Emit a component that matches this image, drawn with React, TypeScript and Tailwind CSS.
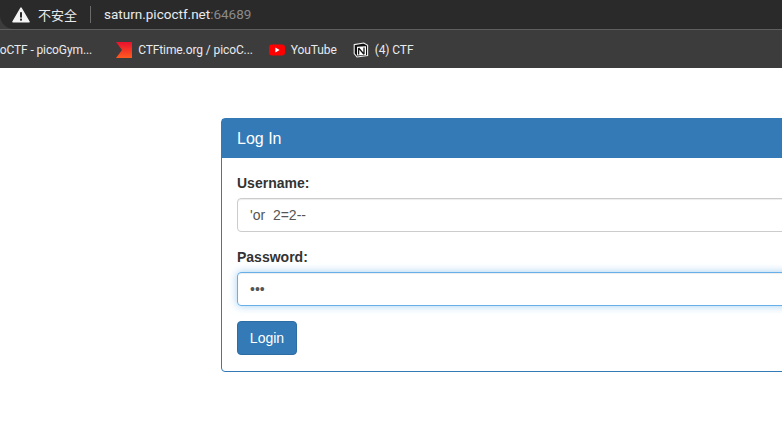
const sans = "font-['Liberation_Sans',Arial,sans-serif]";

function WarningIcon() {
  return (
    <svg width="18" height="16" viewBox="0 0 18 16">
      <path d="M9 1.2 L17 14.8 L1 14.8 Z" fill="#f4f4f4" stroke="#f4f4f4" strokeWidth="1.6" strokeLinejoin="round" />
      <rect x="8" y="5.2" width="2" height="5.4" fill="#2a2a2a" />
      <rect x="8" y="11.6" width="2" height="2" fill="#2a2a2a" />
    </svg>
  );
}

function CtftimeIcon() {
  return (
    <svg width="16" height="16" viewBox="0 0 16 16">
      <defs>
        <linearGradient id="ctf" x1="0" y1="0" x2="0" y2="1">
          <stop offset="0" stopColor="#e8112d" />
          <stop offset="1" stopColor="#ff5a1f" />
        </linearGradient>
      </defs>
      <path d="M0 0 H16 V16 H0 L6 8 Z" fill="url(#ctf)" />
    </svg>
  );
}

function YoutubeIcon() {
  return (
    <svg width="16" height="12" viewBox="0 0 16 12">
      <rect width="16" height="11" y="0.5" rx="3" fill="#ff0000" />
      <path d="M6.4 3.6 L10.6 6 L6.4 8.4 Z" fill="#ffffff" />
    </svg>
  );
}

function NotionIcon() {
  return (
    <svg width="16" height="16" viewBox="0 0 16 16">
      <path d="M1.2 2.6 L10.8 1 L14.6 3.4 V13.6 L4 15 L1.2 11.6 Z" fill="#111" stroke="#eee" strokeWidth="1.1" />
      <path d="M4 4.8 L13 4.2 V13 L4 13.6 Z" fill="#fff" />
      <path d="M5.6 6 V12.4 M5.6 6 L11 12.2 M11 5.6 V12.2" stroke="#111" strokeWidth="1.3" fill="none" />
    </svg>
  );
}

function Bookmark({ icon, label }: { icon?: React.ReactNode; label: string }) {
  return (
    <div className="flex items-center gap-[6px] shrink-0">
      {icon}
      <span className="font-['Roboto',sans-serif] text-[12px] tracking-[-0.1px] text-[#e8eaed] whitespace-nowrap">{label}</span>
    </div>
  );
}

export default function App() {
  return (
    <div className={`h-[433px] w-[782px] overflow-hidden bg-white ${sans}`}>
      {/* browser chrome */}
      <div className="h-[29px] bg-[#3c3c3c]">
        <div className="flex h-full items-center rounded-bl-[14px] bg-[#2a2a2a] pl-[12px]">
          <WarningIcon />
          <span className="ml-[8px] font-['Noto_Sans_CJK_SC',sans-serif] text-[13px] text-[#e8eaed]">不安全</span>
          <div className="ml-[13px] h-[17px] w-px bg-[#6b6b6b]" />
          <span className="ml-[13px] font-['Roboto',sans-serif] text-[13.5px] text-[#e8eaed]">
            saturn.picoctf.net<span className="text-[#8a8a8a]">:64689</span>
          </span>
        </div>
      </div>
      <div className="h-[39px] overflow-hidden border-t border-[#5f5f5f] bg-[#3c3c3c]">
        <div className="ml-[-16px] flex h-full items-center pt-[1px]">
          <Bookmark label="picoCTF - picoGym..." />
          <div className="ml-[24px]">
            <Bookmark icon={<CtftimeIcon />} label="CTFtime.org / picoC..." />
          </div>
          <div className="ml-[16px]">
            <Bookmark icon={<YoutubeIcon />} label="YouTube" />
          </div>
          <div className="ml-[16px]">
            <Bookmark icon={<NotionIcon />} label="(4) CTF" />
          </div>
        </div>
      </div>

      {/* login panel */}
      <div className="pl-[221px] pt-[50px]">
        <div className="w-[760px] rounded-[4px] border border-[#337ab7]">
          <div className="flex h-[39px] items-center bg-[#337ab7] px-[15px] text-[16px] text-white">Log In</div>
          <div className="px-[15px] pt-[15px] pb-[16px] text-[14px] text-[#333]">
            <label className="mb-[5px] block h-[20px] font-bold leading-[20px]">Username:</label>
            <input
              readOnly
              value="'or  2=2--"
              className="block h-[34px] w-full rounded-[4px] border border-[#ccc] px-[12px] text-[14px] text-[#555] shadow-[inset_0_1px_1px_rgba(0,0,0,0.075)] outline-none"
            />
            <label className="mt-[15px] mb-[5px] block h-[20px] font-bold leading-[20px]">Password:</label>
            <input
              readOnly
              type="password"
              value="123"
              className="block h-[34px] w-full rounded-[4px] border border-[#66afe9] px-[12px] text-[14px] text-[#555] shadow-[inset_0_1px_1px_rgba(0,0,0,0.075),0_0_8px_rgba(102,175,233,0.6)] outline-none"
            />
            <button className="mt-[15px] block h-[34px] w-[60px] rounded-[4px] border border-[#2e6da4] bg-[#337ab7] text-[14px] text-white">
              Login
            </button>
          </div>
        </div>
      </div>
    </div>
  );
}
